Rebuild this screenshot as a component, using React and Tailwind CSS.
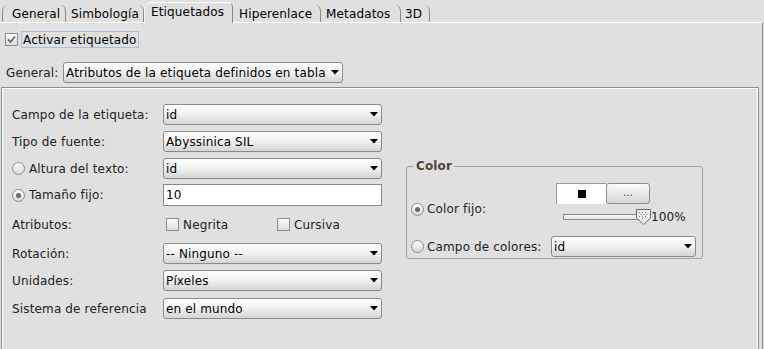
import React from "react";

function Combo({ value, className }) {
  return (
    <div
      className={
        "flex items-center justify-between h-[21px] border border-[#8a8a8a] rounded-[3px] bg-linear-to-b from-[#fdfdfd] via-[#f1f1f1] to-[#d4d4d4] pl-[2px] pr-[3px] shrink-0 " +
        className
      }
    >
      <span className="text-black leading-none whitespace-nowrap">{value}</span>
      <svg width="8" height="5" viewBox="0 0 8 5">
        <path d="M0 0H8L4 4.5Z" fill="#000" />
      </svg>
    </div>
  );
}

function Radio({ checked }) {
  return (
    <span className="w-[13px] h-[13px] rounded-full border border-[#8c8c8c] bg-linear-to-b from-[#fefefe] to-[#d8d8d8] flex items-center justify-center shrink-0">
      {checked && <span className="w-[5px] h-[5px] rounded-full bg-[#6b6b6b]" />}
    </span>
  );
}

function Check({ checked }) {
  return (
    <span className="w-[13px] h-[13px] border border-[#8c8c8c] bg-linear-to-b from-[#fefefe] to-[#dcdcdc] flex items-center justify-center shrink-0">
      {checked && (
        <svg width="9" height="9" viewBox="0 0 9 9">
          <path d="M1 4.5L3.5 7L8 1.5" fill="none" stroke="#6a6a6a" strokeWidth="1.8" />
        </svg>
      )}
    </span>
  );
}

function Tab({ label, selected, className }) {
  return (
    <div
      className={
        "flex items-center shrink-0 " +
        (selected
          ? "relative z-10 h-[21px] -mb-[1px] border-t border-l border-r border-t-white border-l-[#f4f4f4] border-r-[#8a8a8a] rounded-tl-[7px] rounded-tr-[5px] pb-[3px] bg-[#e0e0e0] "
          : "h-[17px] border-r border-r-[#8a8a8a] rounded-tr-[6px] pt-[1px] ") +
        className
      }
    >
      <span className="text-black leading-none whitespace-nowrap">{label}</span>
    </div>
  );
}

function Row({ children, className }) {
  return <div className={"flex items-center h-[21px] " + (className || "")}>{children}</div>;
}

export default function App() {
  return (
    <div className="w-[764px] h-[349px] overflow-hidden bg-[#e0e0e0] font-['DejaVu_Sans',sans-serif] text-[12px] tracking-[0.15px] text-[#222]">
      {/* Tabs */}
      <div className="h-[22px] flex items-end pl-[2px]">
        <Tab label="General" className="w-[64px] pl-[9px] border-l border-l-[#8a8a8a] rounded-tl-[6px]" />
        <Tab label="Simbología" className="w-[78px] pl-[5px]" />
        <Tab label="Etiquetados" selected className="w-[89px] pl-[6px]" />
        <Tab label="Hiperenlace" className="w-[88px] pl-[6px]" />
        <Tab label="Metadatos" className="w-[80px] pl-[5px]" />
        <Tab label="3D" className="w-[29px] pl-[4px]" />
      </div>

      {/* Content */}
      <div className="w-[763px] h-[327px] border-t border-t-white border-r border-r-[#8a8a8a] overflow-hidden">
        <div className="flex items-center ml-[5px] mt-[8px] h-[17px]">
          <Check checked />
          <span className="ml-[3px] h-[17px] border border-[#a6bfdb] px-[1px] flex items-center text-black">
            Activar etiquetado
          </span>
        </div>

        <div className="flex items-center ml-[6px] mt-[14px] h-[21px]">
          <span className="w-[57px]">General:</span>
          <Combo value="Atributos de la etiqueta definidos en tabla" className="w-[280px]" />
        </div>

        <div className="ml-[1px] mt-[4px] w-[758px] h-[300px] border border-[#8e8e8e] shadow-[inset_1px_1px_0_#ffffff,inset_-1px_0_0_#ffffff] flex items-start pt-[16px] pl-[10px]">
          {/* left form */}
          <div className="flex flex-col w-[370px]">
            <Row>
              <span className="w-[151px]">Campo de la etiqueta:</span>
              <Combo value="id" className="w-[219px]" />
            </Row>
            <Row className="mt-[6px]">
              <span className="w-[151px]">Tipo de fuente:</span>
              <Combo value="Abyssinica SIL" className="w-[219px]" />
            </Row>
            <Row className="mt-[6px]">
              <span className="w-[151px] flex items-center gap-[4px]">
                <Radio />
                <span>Altura del texto:</span>
              </span>
              <Combo value="id" className="w-[219px]" />
            </Row>
            <div className="flex items-center h-[22px] mt-[5px]">
              <span className="w-[151px] flex items-center gap-[4px]">
                <Radio checked />
                <span>Tamaño fijo:</span>
              </span>
              <div className="w-[219px] h-[22px] bg-white border border-[#8a8a8a] flex items-center pl-[2px] text-black">
                10
              </div>
            </div>
            <Row className="mt-[8px]">
              <span className="w-[154px]">Atributos:</span>
              <span className="w-[111px] flex items-center gap-[4px]">
                <Check />
                <span>Negrita</span>
              </span>
              <span className="flex items-center gap-[4px]">
                <Check />
                <span>Cursiva</span>
              </span>
            </Row>
            <Row className="mt-[8px]">
              <span className="w-[151px]">Rotación:</span>
              <Combo value="-- Ninguno --" className="w-[219px]" />
            </Row>
            <Row className="mt-[6px]">
              <span className="w-[151px]">Unidades:</span>
              <Combo value="Píxeles" className="w-[219px]" />
            </Row>
            <Row className="mt-[7px]">
              <span className="w-[151px]">Sistema de referencia</span>
              <Combo value="en el mundo" className="w-[219px]" />
            </Row>
          </div>

          {/* Color group */}
          <fieldset className="ml-[24px] mt-[55px] w-[297px] border border-[#a2a2a2] rounded-[3px] pl-[4px] pr-[5px] pb-[1px]">
            <legend className="ml-[3px] px-[2px] font-bold text-[#4f4638] leading-[14px]">Color</legend>
            <div className="flex items-start mt-[10px]">
              <div className="w-[145px] flex items-center gap-[3px] mt-[17px]">
                <Radio checked />
                <span>Color fijo:</span>
              </div>
              <div className="flex flex-col">
                <div className="flex">
                  <div className="w-[50px] h-[21px] bg-white border-t border-l border-[#9a9a9a] flex items-center justify-center">
                    <span className="w-[8px] h-[8px] bg-black" />
                  </div>
                  <div className="w-[44px] h-[21px] border border-[#8a8a8a] rounded-[3px] bg-linear-to-b from-[#fbfbfb] to-[#d6d6d6] flex items-center justify-center text-[10px] text-[#3b2e55] leading-none pb-[2px]">
                    ...
                  </div>
                </div>
                <div className="flex items-center h-[15px] mt-[5px]">
                  <div className="ml-[7px] w-[81px] h-[6px] border border-[#8a8a8a] bg-linear-to-b from-[#f6f6f6] to-[#e4e4e4]" />
                  <svg className="-ml-[8px] shrink-0" width="15" height="16" viewBox="0 0 15 16">
                    <path d="M0.5 0.5H14.5V9L7.5 15.5L0.5 9Z" fill="#ececec" stroke="#6a6a6a" />
                    <g fill="#777">
                      <rect x="3" y="3" width="1" height="1" />
                      <rect x="6" y="3" width="1" height="1" />
                      <rect x="9" y="3" width="1" height="1" />
                      <rect x="4.5" y="5" width="1" height="1" />
                      <rect x="7.5" y="5" width="1" height="1" />
                      <rect x="10.5" y="5" width="1" height="1" />
                      <rect x="3" y="7" width="1" height="1" />
                      <rect x="6" y="7" width="1" height="1" />
                      <rect x="9" y="7" width="1" height="1" />
                      <rect x="6" y="9" width="1" height="1" />
                    </g>
                  </svg>
                  <span className="leading-none">100%</span>
                </div>
              </div>
            </div>
            <div className="flex items-center mt-[12px]">
              <div className="w-[140px] flex items-center gap-[3px]">
                <Radio />
                <span>Campo de colores:</span>
              </div>
              <Combo value="id" className="w-[145px] h-[20px]" />
            </div>
          </fieldset>
        </div>
      </div>
    </div>
  );
}
